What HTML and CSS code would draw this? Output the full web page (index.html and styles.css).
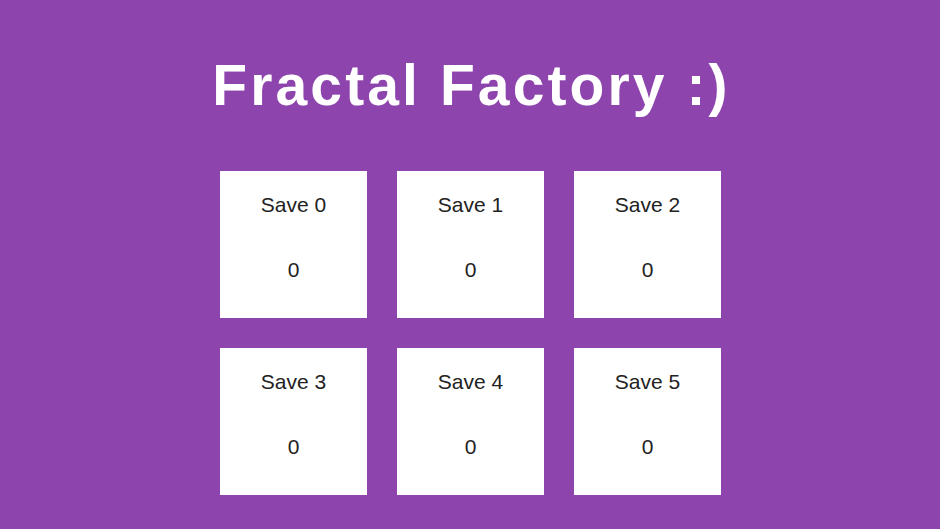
FILE: index.html
```html
<!DOCTYPE html>
<html>
<head>
<meta charset="utf-8">
<link rel="stylesheet" href="styles.css">
</head>
<body>
<h1 class="title">Fractal Factory :)</h1>
<div class="grid">
  <div class="card"><div class="name">Save 0</div><div class="value">0</div></div>
  <div class="card"><div class="name">Save 1</div><div class="value">0</div></div>
  <div class="card"><div class="name">Save 2</div><div class="value">0</div></div>
  <div class="card"><div class="name">Save 3</div><div class="value">0</div></div>
  <div class="card"><div class="name">Save 4</div><div class="value">0</div></div>
  <div class="card"><div class="name">Save 5</div><div class="value">0</div></div>
</div>
</body>
</html>
```
FILE: styles.css
```css
html, body {
  margin: 0;
  padding: 0;
}
body {
  background: #8e44ad;
  font-family: "Liberation Sans", Arial, sans-serif;
  width: 940px;
  height: 529px;
  overflow: hidden;
}
.title {
  margin: 0;
  padding-top: 52px;
  text-align: center;
  color: #fff;
  font-size: 57px;
  font-weight: bold;
  letter-spacing: 3.1px;
  text-indent: 3px;
  line-height: 66px;
}
.grid {
  display: grid;
  grid-template-columns: repeat(3, 147px);
  grid-auto-rows: 147px;
  gap: 30px;
  justify-content: center;
  margin-top: 53px;
  padding-left: 1px;
}
.card {
  background: #fff;
  display: flex;
  flex-direction: column;
  align-items: center;
  color: #222;
  font-size: 21px;
}
.name {
  margin-top: 22px;
  line-height: 24px;
}
.value {
  margin-top: 41px;
  line-height: 24px;
}
```
